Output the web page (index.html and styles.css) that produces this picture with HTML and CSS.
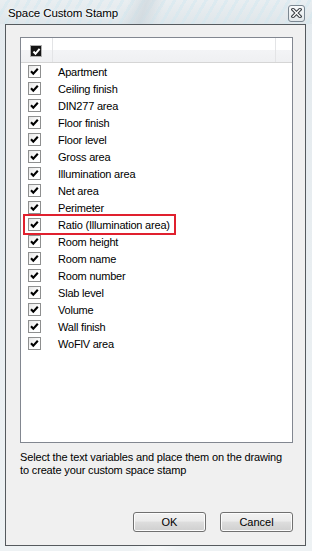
FILE: index.html
```html
<!DOCTYPE html>
<html lang="en">
<head>
    <meta charset="UTF-8">
    <title>Space Custom Stamp</title>
    <link rel="stylesheet" href="styles.css">
</head>
<body>
    <div class="window">
        <div class="titlebar">
            <span class="title">Space Custom Stamp</span>
            <button class="close" aria-label="Close">
                <svg width="11" height="10" viewBox="0 0 11 10">
                    <path d="M2 1.5 L9 8.5 M9 1.5 L2 8.5" stroke="#3a3f44" stroke-width="3.4" stroke-linecap="square"/>
                    <path d="M2 1.5 L9 8.5 M9 1.5 L2 8.5" stroke="#fff" stroke-width="1.3" stroke-linecap="square"/>
                </svg>
            </button>
        </div>

        <div class="frame">
            <div class="listbox">
                <div class="list-header">
                    <div class="col col-check">
                        <span class="check dark">
                            <svg width="9" height="9" viewBox="0 0 9 9"><path d="M1.5 4.5 L3.5 6.8 L7.6 1.8" fill="none" stroke="#fff" stroke-width="2"/></svg>
                        </span>
                    </div>
                    <div class="col col-name"></div>
                    <div class="col col-rest"></div>
                </div>
                <ul class="items" id="items"></ul>
            </div>

            <p class="hint">Select the text variables and place them on the drawing to create your custom space stamp</p>

            <div class="buttons">
                <button class="btn">OK</button>
                <button class="btn">Cancel</button>
            </div>
        </div>
    </div>

    <script>
        const names = [
            'Apartment', 'Ceiling finish', 'DIN277 area', 'Floor finish', 'Floor level',
            'Gross area', 'Illumination area', 'Net area', 'Perimeter', 'Ratio (Illumination area)',
            'Room height', 'Room name', 'Room number', 'Slab level', 'Volume', 'Wall finish', 'WoFlV area'
        ];
        const tick = '<svg width="11" height="11" viewBox="0 0 11 11"><path d="M2 5.3 L4.3 7.8 L8.8 2.8" fill="none" stroke="#000" stroke-width="2.1"/></svg>';

        let html = '';
        names.forEach(name => {
            const marked = name.startsWith('Ratio') ? ' marked' : '';
            html += `<li class="item${marked}"><span class="check">${tick}</span><span class="label">${name}</span></li>`;
        });
        document.getElementById('items').innerHTML = html;
    </script>
</body>
</html>
```

FILE: styles.css
```css
*, *::before, *::after {
    box-sizing: border-box;
}
body {
    margin: 0;
    font-family: 'Liberation Sans', Arial, sans-serif;
    font-size: 11px;
    color: #000;
    background: #e8edf1;
}
.window {
    width: 312px;
    height: 551px;
    display: flex;
    flex-direction: column;
    background:
        linear-gradient(100deg, rgba(255,255,255,0) 55%, rgba(255,255,255,0.6) 62%, rgba(255,255,255,0) 68%),
        linear-gradient(#e4eaee, #eef2f4);
}
.titlebar {
    height: 24px;
    display: flex;
    align-items: center;
    padding: 0 7px 0 8px;
    background:
        linear-gradient(110deg, rgba(255,255,255,0) 40%, rgba(205,214,220,0.7) 46%, rgba(255,255,255,0) 52%),
        repeating-linear-gradient(120deg, rgba(255,255,255,0) 0 6px, rgba(210,232,240,0.5) 6px 9px),
        linear-gradient(#e9eef1, #dfe6ea);
}
.title {
    font-size: 11.5px;
    letter-spacing: -0.1px;
    flex: 1;
    padding-top: 1px;
    text-shadow: 0 0 6px #fff, 0 0 3px #fff;
}
.close {
    width: 17px;
    height: 17px;
    padding: 0;
    margin-top: 2px;
    border: 1px solid #7b8791;
    border-radius: 3px;
    background: linear-gradient(#f7f9fa, #e2e7ea);
    display: flex;
    align-items: center;
    justify-content: center;
}
.frame {
    flex: 1;
    margin: 0 6px 5px 5px;
    border: 1px solid #555a5e;
    background: #f0f0f0;
    padding: 12px 12px 0 14px;
    display: flex;
    flex-direction: column;
}
.listbox {
    height: 406px;
    border: 1px solid #828790;
    background: #fff;
}
.list-header {
    height: 25px;
    display: flex;
    border-bottom: 1px solid #d5d5d5;
    background: linear-gradient(#ffffff 0, #ffffff 50%, #f3f4f6 50%, #eff0f2 100%);
}
.col {
    height: 24px;
    border-right: 1px solid #e3e4e6;
}
.col-check {
    width: 32px;
    padding: 7px 0 0 9px;
}
.col-name {
    width: 223px;
}
.col-rest {
    flex: 1;
    border-right: none;
}
.items {
    list-style: none;
    margin: 0;
    padding: 0;
}
.item {
    position: relative;
    height: 17px;
    display: flex;
    align-items: center;
}
.check {
    width: 13px;
    height: 13px;
    margin-left: 7px;
    border: 1px solid #8e8f8f;
    background: linear-gradient(135deg, #e6e6e6, #ffffff 60%);
    display: flex;
    align-items: center;
    justify-content: center;
}
.check.dark {
    margin-left: 0;
    width: 12px;
    height: 12px;
    border-color: #b0b0b0;
    background: #151515;
}
.label {
    margin-left: 17px;
    letter-spacing: -0.2px;
}
.item.marked::after {
    content: '';
    position: absolute;
    left: 2px;
    top: -2px;
    width: 153px;
    height: 21px;
    border: 2px solid #e0202e;
}
.hint {
    margin: 8px 0 0 0;
    line-height: 13px;
    letter-spacing: -0.15px;
    padding-right: 8px;
}
.buttons {
    margin-top: auto;
    padding-bottom: 13px;
    display: flex;
    justify-content: flex-end;
    gap: 14px;
}
.btn {
    width: 73px;
    height: 20px;
    padding: 0;
    font-family: 'Liberation Sans', Arial, sans-serif;
    font-size: 11px;
    color: #000;
    border: 1px solid #707070;
    border-radius: 3px;
    background: linear-gradient(#f2f2f2 0, #ebebeb 45%, #dddddd 50%, #cfcfcf 100%);
    box-shadow: inset 0 0 0 1px #fcfcfc;
}
```
